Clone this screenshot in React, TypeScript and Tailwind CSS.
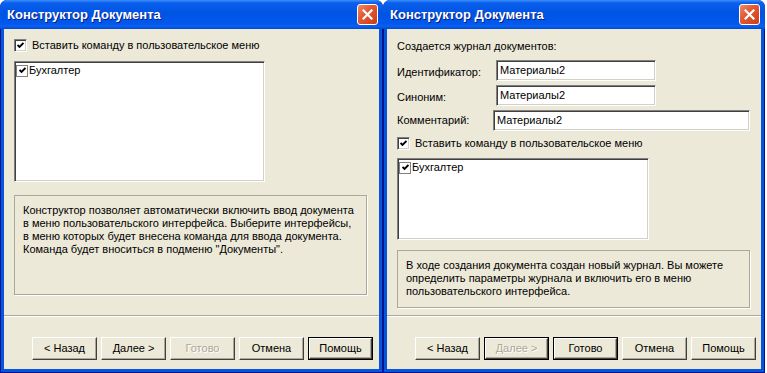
import type { ReactNode } from "react";

const FONT = "font-['Liberation_Sans',Arial,sans-serif]";

function CheckMark() {
  return (
    <svg width="7" height="7" viewBox="0 0 7 7" className="block">
      <polyline points="0.5,3 2.5,5 6.5,1" fill="none" stroke="#000" strokeWidth="1.9" />
    </svg>
  );
}

function CheckBox() {
  return (
    <span className="flex h-[13px] w-[13px] shrink-0 items-center justify-center border border-b-white border-l-[#808080] border-r-white border-t-[#808080] bg-white shadow-[inset_1px_1px_0_#404040,inset_-1px_-1px_0_#d4d0c8]">
      <CheckMark />
    </span>
  );
}

function ListCheck() {
  return (
    <span className="flex h-[12px] w-[12px] shrink-0 items-center justify-center border border-[#808080] bg-white">
      <CheckMark />
    </span>
  );
}

function Sunken({ className, children }: { className?: string; children?: ReactNode }) {
  return (
    <div
      className={`border border-b-white border-l-[#808080] border-r-white border-t-[#808080] bg-white shadow-[inset_1px_1px_0_#404040,inset_-1px_-1px_0_#d4d0c8] ${className ?? ""}`}
    >
      {children}
    </div>
  );
}

function CloseButton() {
  return (
    <div className="flex h-[21px] w-[21px] items-center justify-center rounded-[3px] border border-white bg-[linear-gradient(135deg,#f08a6a_0%,#e35a34_40%,#cc3d15_100%)]">
      <svg width="11" height="11" viewBox="0 0 11 11">
        <path d="M1.5 1.5 L9.5 9.5 M9.5 1.5 L1.5 9.5" stroke="#fff" strokeWidth="2.2" strokeLinecap="square" />
      </svg>
    </div>
  );
}

function Btn({ label, disabled, def }: { label: string; disabled?: boolean; def?: boolean }) {
  const face = (
    <div
      className={`flex flex-1 items-center justify-center border border-b-[#404040] border-l-white border-r-[#404040] border-t-white bg-[#ece9d8] shadow-[inset_-1px_-1px_0_#aca899] ${
        disabled ? "text-[#aca899] [text-shadow:1px_1px_0_#fff]" : "text-black"
      }`}
    >
      {label}
    </div>
  );
  return (
    <div className={`flex h-[23px] w-[65px] ${def ? "border border-black" : ""}`}>{face}</div>
  );
}

function Window({ className, children, buttons }: { className?: string; children: ReactNode; buttons: ReactNode }) {
  return (
    <div className={`flex h-[373px] flex-col overflow-hidden rounded-t-[7px] bg-[#00138c] ${className ?? ""}`}>
      <div className="flex h-[29px] shrink-0 items-center justify-between bg-[linear-gradient(180deg,#3b8ffb_0%,#0a5fec_10%,#0054e3_45%,#0058ec_82%,#0b61f0_90%,#0047d4_100%)] pl-[7px] pr-[5px]">
        <span className="text-[13px] font-bold text-white [text-shadow:1px_1px_0_#0a1c85]">Конструктор Документа</span>
        <CloseButton />
      </div>
      <div className="flex flex-1 flex-col px-px pb-px">
        <div className="flex flex-1 flex-col border-x-[3px] border-b-[3px] border-[#0855dd] bg-[#ece9d8] text-[11px] text-black">
          <div className="flex flex-1 flex-col pl-[10px]">{children}</div>
          <div className="h-[2px] border-t border-[#aca899] bg-white" />
          <div className="flex gap-[4px] pl-[28px] pt-[20px] pb-[9px]">{buttons}</div>
        </div>
      </div>
    </div>
  );
}

function Panel({ className, lines }: { className: string; lines: string[] }) {
  return (
    <div className={`border border-[#aca899] pl-[8px] pt-[8px] leading-[13px] whitespace-nowrap shadow-[1px_1px_0_#fff] ${className}`}>
      {lines.map((l) => (
        <div key={l}>{l}</div>
      ))}
    </div>
  );
}

function Listbox({ className }: { className: string }) {
  return (
    <Sunken className={className}>
      <div className="flex items-center gap-[1px] pl-[1px] pt-[2px] leading-[13px]">
        <ListCheck />
        <span>Бухгалтер</span>
      </div>
    </Sunken>
  );
}

export default function App() {
  return (
    <div className={`flex h-[373px] w-[767px] bg-white ${FONT}`}>
      <Window
        className="w-[383px]"
        buttons={
          <>
            <Btn label="< Назад" />
            <Btn label="Далее >" />
            <Btn label="Готово" disabled />
            <Btn label="Отмена" />
            <Btn label="Помощь" def />
          </>
        }
      >
        <div className="mt-[10px] flex items-center gap-[5px] leading-[13px]">
          <CheckBox />
          <span>Вставить команду в пользовательское меню</span>
        </div>
        <Listbox className="mt-[9px] h-[121px] w-[251px]" />
        <Panel
          className="mt-[13px] h-[100px] w-[353px]"
          lines={[
            "Конструктор позволяет автоматически включить ввод документа",
            "в меню пользовательского интерфейса. Выберите интерфейсы,",
            "в меню которых будет внесена команда для ввода документа.",
            "Команда будет вноситься в подменю \"Документы\".",
          ]}
        />
      </Window>

      <Window
        className="w-[382px]"
        buttons={
          <>
            <Btn label="< Назад" />
            <Btn label="Далее >" disabled def />
            <Btn label="Готово" def />
            <Btn label="Отмена" />
            <Btn label="Помощь" />
          </>
        }
      >
        <div className="mt-[11px] leading-[13px]">Создается журнал документов:</div>
        <div className="mt-[7px] flex flex-col gap-[4px]">
          <div className="flex h-[21px] items-center">
            <span className="w-[99px] pt-[3px]">Идентификатор:</span>
            <Sunken className="flex h-[21px] w-[160px] items-center pl-[3px]">Материалы2</Sunken>
          </div>
          <div className="flex h-[21px] items-center">
            <span className="w-[99px] pt-[3px]">Синоним:</span>
            <Sunken className="flex h-[21px] w-[160px] items-center pl-[3px]">Материалы2</Sunken>
          </div>
          <div className="flex h-[21px] items-center">
            <span className="w-[96px]">Комментарий:</span>
            <Sunken className="flex h-[21px] w-[257px] items-center pl-[3px]">Материалы2</Sunken>
          </div>
        </div>
        <div className="mt-[6px] flex items-center gap-[5px] leading-[13px]">
          <CheckBox />
          <span>Вставить команду в пользовательское меню</span>
        </div>
        <Listbox className="mt-[8px] h-[82px] w-[252px]" />
        <Panel
          className="mt-[10px] h-[58px] w-[353px]"
          lines={[
            "В ходе создания документа создан новый журнал. Вы можете",
            "определить параметры журнала и включить его в меню",
            "пользовательского интерфейса.",
          ]}
        />
      </Window>
    </div>
  );
}
